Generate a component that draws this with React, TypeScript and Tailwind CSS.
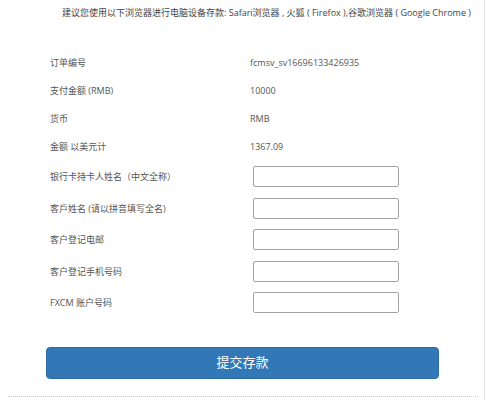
const infoRows = [
  { label: '订单编号', value: 'fcmsv_sv16696133426935' },
  { label: '支付金额 (RMB)', value: '10000' },
  { label: '货币', value: 'RMB' },
  { label: '金额 以美元计', value: '1367.09' },
]

const inputRows = [
  '银行卡持卡人姓名（中文全称）',
  '客戶姓名 (请以拼音填写全名)',
  '客户登记电邮',
  '客户登记手机号码',
  'FXCM 账户号码',
]

export default function App() {
  return (
    <div className="h-[400px] w-[485px] overflow-hidden border-r border-[#e4e4e4] bg-white font-['Open_Sans','Noto_Sans_CJK_SC',sans-serif] text-[9px] text-[#555]">
      <div className="flex h-[26px] items-center justify-end pr-[13px] text-[#444]">
        建议您使用以下浏览器进行电脑设备存款: Safari浏览器 , 火狐 ( Firefox ),谷歌浏览器 ( Google Chrome )
      </div>

      <div className="mt-[23px]">
        {infoRows.map((row) => (
          <div key={row.label} className="flex h-[28px] items-center pl-[50px]">
            <div className="w-[200px]">{row.label}</div>
            <div>{row.value}</div>
          </div>
        ))}
        {inputRows.map((label) => (
          <div key={label} className="flex h-[31.5px] items-center pl-[50px]">
            <div className="w-[200px]">{label}</div>
            <input
              type="text"
              className="ml-[3px] h-[21px] w-[146px] rounded-[2px] border border-[#a3a3a3] bg-white outline-none"
            />
          </div>
        ))}
      </div>

      <div className="mt-[28px] pl-[46px]">
        <button
          type="button"
          className="h-[32px] w-[393px] rounded-[4px] border border-[#2e6da4] bg-[#3278b6] text-[13px] text-white"
        >
          提交存款
        </button>
      </div>

      <div className="mx-[8px] mt-[17px] w-[470px] border-t border-dotted border-[#c8c8c8]" />
    </div>
  )
}
